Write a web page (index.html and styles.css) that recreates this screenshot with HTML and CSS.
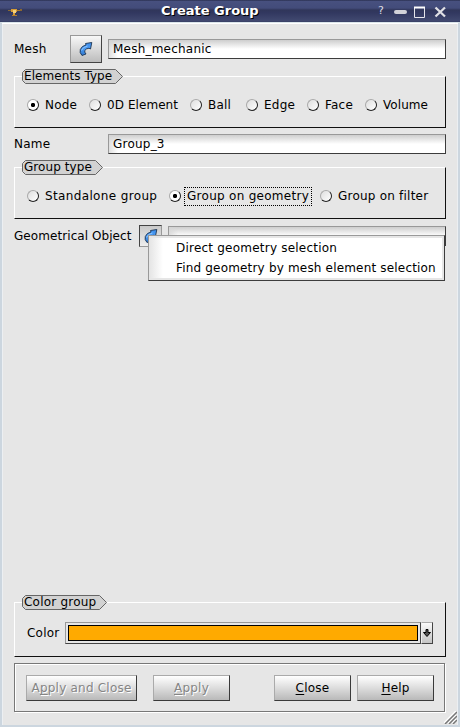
FILE: index.html
```
<!DOCTYPE html>
<html lang="en">
<head>
<meta charset="utf-8">
<title>Create Group</title>
<link rel="stylesheet" href="styles.css">
</head>
<body>
<svg width="0" height="0" class="defs" aria-hidden="true">
  <defs>
    <linearGradient id="blue" x1="0" y1="0" x2="0" y2="1"><stop offset="0" stop-color="#3d8fee"/><stop offset=".5" stop-color="#4b9af2"/><stop offset="1" stop-color="#2f76cc"/></linearGradient>
    <symbol id="pick" viewBox="0 0 16 16">
      <path d="M4 14.500Q1.200 11.500 2.300 8.500Q3.800 4.800 8 4L7.500 2.500L13.800 1.500L12.500 8L11 7.200Q7.800 7.600 6.800 9.500Q6.200 11 8 13Z" fill="url(#blue)" stroke="#1c3350" stroke-width=".9"/>
      <path d="M3.500 9.500Q4.500 6 9.500 5" fill="none" stroke="#8cc4fb" stroke-width="1"/>
    </symbol>
  </defs>
</svg>
<div class="window">
  <header class="titlebar">
    <svg class="logo" width="16" height="12" viewBox="0 0 16 12"><path d="M0 4h3v1H0z" fill="#8b6a32"/><path d="M3 3h6v3H7v3H5V6H3z" fill="#d49a35"/><path d="M5 4h3v3H5z" fill="#f5d17b"/><path d="M4 9h5v1H4z" fill="#b27d2a"/><path d="M9 4h3v1H9z" fill="#a87a2e"/><path d="M12 3h2v2h-2z" fill="#8a6631"/></svg>
    <h1>Create Group</h1>
    <div class="controls">
      <span class="what">?</span>
      <svg width="68" height="16" viewBox="0 0 68 16"><rect x="8" y="6" width="13" height="4" rx="2" fill="#d2d2d8"/><path d="M28.500 3.500h10v10h-10z" fill="none" stroke="#e5e5eb"/><path d="M28 3.500h11" stroke="#fff" stroke-width="2"/><path d="M49.500 3.500l9.500 9M59 3.500l-9.500 9" stroke="#e0e0e5" stroke-width="2.300"/></svg>
    </div>
  </header>
  <main class="body">
    <div class="row mesh">
      <label>Mesh</label>
      <button class="tool"><svg width="16" height="16"><use href="#pick"/></svg></button>
      <div class="field"><span>Mesh_mechanic</span></div>
    </div>
    <section class="group elements">
      <div class="legend"><svg width="101" height="15"><path d="M3.500 .5H93.500L100.500 7.500L93.500 14.500H3.500L.5 11.500V3.500Z"/></svg><span class="tight">Elements Type</span></div>
      <div class="radios">
        <label class="radio on r-node"><i></i><span>Node</span></label>
        <label class="radio r-zero"><i></i><span class="tight">0D Element</span></label>
        <label class="radio r-ball"><i></i><span>Ball</span></label>
        <label class="radio r-edge"><i></i><span>Edge</span></label>
        <label class="radio r-face"><i></i><span>Face</span></label>
        <label class="radio"><i></i><span class="tight">Volume</span></label>
      </div>
    </section>
    <div class="row name">
      <label>Name</label>
      <div class="field"><span>Group_3</span></div>
    </div>
    <section class="group type">
      <div class="legend"><svg width="81" height="15"><path d="M3.500 .5H73.500L80.500 7.500L73.500 14.500H3.500L.5 11.500V3.500Z"/></svg><span class="tight">Group type</span></div>
      <div class="radios">
        <label class="radio r-alone"><i></i><span class="wide">Standalone group</span></label>
        <label class="radio on r-geom"><i></i><span class="focus">Group on geometry</span></label>
        <label class="radio"><i></i><span>Group on filter</span></label>
      </div>
    </section>
    <div class="row geom">
      <label class="tight">Geometrical Object</label>
      <button class="tool small"><svg width="16" height="16"><use href="#pick"/></svg></button>
      <div class="field"></div>
      <div class="menu"><div>Direct geometry selection</div><div class="find">Find geometry by mesh element selection</div></div>
    </div>
    <section class="group color">
      <div class="legend"><svg width="85" height="15"><path d="M3.500 .5H77.500L84.500 7.500L77.500 14.500H3.500L.5 11.500V3.500Z"/></svg><span>Color group</span></div>
      <div class="picker">
        <label>Color</label>
        <div class="swatch"><div></div></div>
        <button class="drop"><svg width="9" height="9" viewBox="0 0 9 9"><path d="M3 .5h2v3h2.500L4 7.500L.5 3.500h2.500z" fill="#555" stroke="#000"/></svg></button>
      </div>
    </section>
    <footer class="actions">
      <button class="btn disabled b-both"><span>A<u>p</u>ply and Close</span></button>
      <button class="btn disabled b-apply"><span><u>A</u>pply</span></button>
      <button class="btn b-close"><span><u>C</u>lose</span></button>
      <button class="btn b-help"><span><u>H</u>elp</span></button>
    </footer>
  </main>
  <svg class="grip" width="13" height="13" viewBox="0 0 13 13"><path d="M1 13L13 1M5 13L13 5M9 13L13 9" stroke="#fff" stroke-width="1.500" transform="translate(-1 -1)"/><path d="M1 13L13 1M5 13L13 5M9 13L13 9" stroke="#777" stroke-width="1.500"/></svg>
</div>
</body>
</html>
```
FILE: styles.css
```
* { box-sizing: border-box; }
body { margin: 0; font: 12px/16px "DejaVu Sans", sans-serif; letter-spacing: .22px; color: #000; }
.defs { position: absolute; }
.tight { letter-spacing: .07px; }
.wide { letter-spacing: .36px; }
.window { position: relative; width: 460px; height: 727px; background: #e6e6e6; overflow: hidden; }
.titlebar { height: 22px; display: flex; align-items: center; background: linear-gradient(#202540 0, #47507f 1px, #434c7a 8px, #30365a 10px, #323860 13px, #414970 21px, #343b60 22px); color: #fff; }
.logo { margin: 2px 0 0 8px; flex: none; }
h1 { flex: 1; margin: 0 0 0 137px; font-size: 13px; line-height: 20px; font-weight: bold; letter-spacing: 0; text-shadow: 1px 1px 0 #000; white-space: nowrap; }
.controls { display: flex; align-items: center; height: 22px; }
.what { font-size: 11px; color: #dcdce4; width: 8px; }
.controls svg { margin: 2px 6px 0 0; }
.body { height: 705px; border: solid #ccd6df; border-width: 1px 2px 2px; border-top-color: #dbe5ea; padding: 12px 12px 0; box-shadow: inset 0 1px #fff, inset 1px 0 #eceff2, inset -1px 0 #eceff2; }
button { font: inherit; letter-spacing: inherit; padding: 0; margin: 0; color: #000; border-radius: 0; }
.row { display: flex; position: relative; align-items: center; white-space: nowrap; }
.mesh { height: 28px; }
.mesh > label { width: 56px; }
.tool { width: 32px; height: 28px; flex: none; margin-right: 6px; display: flex; align-items: center; justify-content: center; border: 1px solid #777; border-color: #999 #444 #444 #999; background: linear-gradient(#f8f8f8, #bcbcbc); }
.field { flex: 1; height: 20px; border: 1px solid #3c3c3c; border-top-color: #999; border-left-color: #999; background: linear-gradient(90deg, rgba(215,215,215,.8), rgba(255,255,255,0) 9px), linear-gradient(#cecece, #fff 9px); padding-left: 4px; line-height: 18px; }
.group { position: relative; border: 1px solid #fff; border-right-color: #111; border-bottom-color: #111; height: 52px; }
.elements { margin-top: 13px; }
.legend { position: absolute; left: 7px; top: -8px; height: 15px; }
.legend svg { display: block; fill: #d2d2d2; stroke: #666; }
.legend span { position: absolute; left: 2px; top: -1px; white-space: nowrap; }
.radios { display: flex; padding: 20px 0 0 12px; white-space: nowrap; }
.radio { display: flex; align-items: center; height: 16px; }
.radio i { width: 12px; height: 12px; flex: none; margin-right: 6px; border-radius: 50%; border: 1px solid; border-color: #aaa #222 #222 #aaa; background: linear-gradient(135deg, #dedede, #fff); }
.radio.on i { background: radial-gradient(circle, #000 1.800px, #fff 2.500px); }
.r-node { width: 62px; }
.r-zero { width: 101px; }
.r-ball { width: 56px; }
.r-edge { width: 61px; }
.r-face { width: 58px; }
.name { height: 20px; margin-top: 6px; }
.name label { width: 94px; }
.type { margin-top: 13px; }
.r-alone { width: 142px; }
.r-geom { width: 151px; }
.focus { border: 1px dotted #000; padding: 0 2px 1px; margin-left: -3px; width: 128px; height: 19px; letter-spacing: .28px; }
.geom { height: 22px; margin-top: 6px; }
.geom label { width: 125px; }
.small { width: 23px; height: 22px; background: linear-gradient(#c9c9c9, #eee); border-color: #444 #999 #999 #444; }
.menu { position: absolute; left: 134px; top: 10px; width: 297px; height: 46px; border: 1px solid #3c3c3c; border-top-color: #999; border-left-color: #999; background: linear-gradient(90deg, #e4e4e4, #fff 14px); box-shadow: inset -2px -2px #e6e6e6, inset 0 2px #e6e6e6; padding: 2px 0 0 27px; line-height: 20px; }
.find { letter-spacing: .18px; }
.color { margin-top: 355px; height: 55px; }
.picker { display: flex; align-items: center; padding: 19px 12px 0; }
.picker label { width: 38px; }
.swatch { width: 356px; height: 22px; padding: 2px; border: 1px solid #444; border-top-color: #999; border-left-color: #999; }
.swatch div { height: 16px; border: 1px solid #000; background: #ffaa00; }
.drop { width: 12px; height: 22px; display: flex; align-items: center; justify-content: center; border: 1px solid; border-color: #aaa #444 #444 #eee; background: linear-gradient(#fafafa, #c4c4c4); }
.actions { height: 49px; margin-top: 6px; width: 431px; display: flex; align-items: center; padding: 0 10px 0 11px; border: 1px solid #777; box-shadow: inset 1px 1px #fff, 1px 1px #fff; white-space: nowrap; }
.btn { height: 26px; width: 77px; border: 1px solid; border-color: #aaa #3a3a3a #3a3a3a #aaa; background: linear-gradient(#fff, #e0e0e0 45%, #b9b9b9); }
.btn u { text-underline-offset: 2px; text-decoration-thickness: 1px; text-decoration-skip-ink: none; }
.disabled { color: #858585; text-shadow: 1px 1px #fff; }
.b-both { width: 111px; margin-right: 16px; }
.b-apply { margin-right: 44px; }
.b-close { margin-right: 6px; }
.grip { position: absolute; right: 3px; bottom: 3px; }
```
